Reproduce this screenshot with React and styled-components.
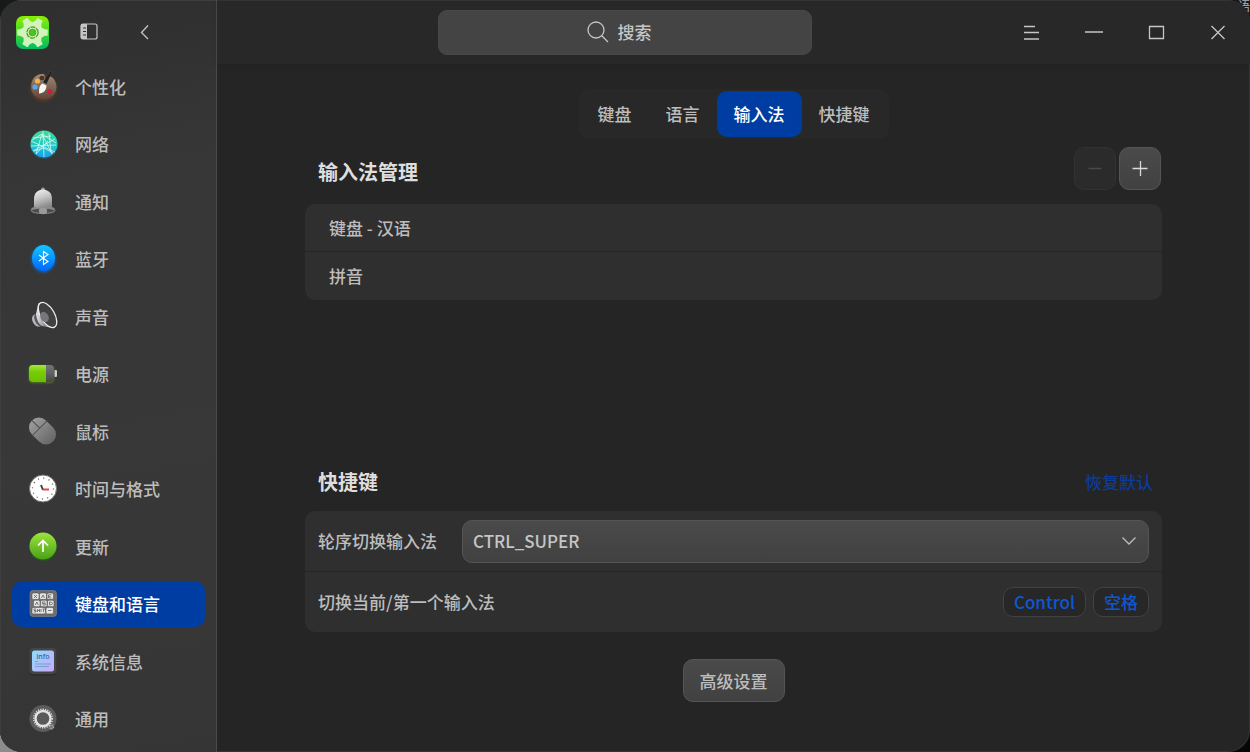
import { useState } from 'react';
import styled, { createGlobalStyle } from 'styled-components';

const GlobalStyle = createGlobalStyle`
  * {
    box-sizing: border-box;
  }

  body {
    margin: 0;
    background: linear-gradient(90deg, #8c8c8c 0, #8c8c8c 60px, #060606 120px) bottom / 100% 60px no-repeat #17191b;
    color: #bdbdbd;
    font-family: "Noto Sans CJK SC", "Noto Sans", sans-serif;
    font-size: 17px;
    font-weight: 500;
    line-height: 24px;
  }

  button, input, select {
    font: inherit;
    color: inherit;
  }
`;

const Desktop = styled.div`
  position: relative;
  overflow: hidden;
`;

const DesktopText = styled.span`
  position: absolute;
  top: -6px;
  right: 0;
  color: #9a9da1;
  font-size: 12px;
`;

const Window = styled.div`
  position: relative;
  display: flex;
  min-height: 100vh;
  overflow: hidden;
  border-radius: 22px;
  background: #252525;
  box-shadow: inset 0 0 0 1px #333;
`;

const Sidebar = styled.aside`
  display: flex;
  flex-direction: column;
  flex: none;
  width: 217px;
  padding-bottom: 4px;
  border-right: 1px solid #4b4b4b;
  background: linear-gradient(170deg, #2e2e2e 0, #363636 22%, #383838 60%, #353535 100%);
  box-shadow: inset 1px 1px 0 #3e3e3e;
`;

const SidebarHeader = styled.div`
  display: flex;
  align-items: center;
  gap: 24px;
  height: 58px;
  padding: 6px 0 0 16px;
`;

const IconButton = styled.button`
  display: flex;
  align-items: center;
  justify-content: center;
  width: 32px;
  height: 32px;
  padding: 0;
  border: 0;
  background: none;
  color: #c6c6c6;
`;

const Nav = styled.nav`
  display: grid;
  flex: 1;
  grid-auto-rows: 1fr;
  align-items: center;
  padding: 0 11px 0 12px;
`;

const NavItem = styled.button`
  display: flex;
  align-items: center;
  gap: 18px;
  height: 46px;
  padding: 0 0 0 17px;
  border: 0;
  border-radius: 10px;
  background: ${({ $active }) => ($active ? '#003da3' : 'none')};
  color: ${({ $active }) => ($active ? '#fff' : '#bdbdbd')};
  text-align: left;

  svg {
    flex: none;
    overflow: visible;
  }
`;

const Main = styled.main`
  display: flex;
  flex: 1;
  flex-direction: column;
  min-width: 0;
`;

const TitleBar = styled.header`
  display: grid;
  grid-template-columns: calc(50vw - 404px) 374px 1fr;
  align-items: center;
  height: 64px;
  padding-right: 16px;
  background: #282828;
  box-shadow: inset 0 1px 0 #343434, 0 1px 6px rgba(0, 0, 0, 0.12);
`;

const Search = styled.label`
  display: flex;
  grid-column: 2;
  align-items: center;
  justify-content: center;
  gap: 9px;
  height: 45px;
  border: 1px solid #484848;
  border-radius: 9px;
  background: #444;
`;

const SearchInput = styled.input`
  width: 46px;
  padding: 0;
  border: 0;
  outline: 0;
  background: none;

  &::placeholder {
    color: #c6c6c6;
    opacity: 1;
  }
`;

const WindowControls = styled.div`
  display: flex;
  justify-content: flex-end;
  gap: 30px;
`;

const Content = styled.div`
  padding: 25px 88px 50px;
`;

const Tabs = styled.div`
  display: flex;
  width: fit-content;
  margin: 0 auto;
  padding: 2px;
  border-radius: 10px;
  background: #282828;
`;

const Tab = styled.button`
  height: 46px;
  padding: 0 17px;
  border: 0;
  border-radius: 10px;
  background: ${({ $active }) => ($active ? '#003da3' : 'none')};
  color: ${({ $active }) => ($active ? '#fff' : '#bdbdbd')};
`;

const SectionHeader = styled.div`
  display: flex;
  align-items: center;
  justify-content: space-between;
  height: ${({ $compact }) => ($compact ? '52px' : '58px')};
  margin-bottom: 7px;
  padding: 0 1px 0 13px;
`;

const SectionTitle = styled.h2`
  margin: 0;
  padding-top: 8px;
  color: #dedede;
  font-size: 20px;
  font-weight: 700;
`;

const ButtonGroup = styled.div`
  display: flex;
  gap: 3px;
`;

const Button = styled.button`
  display: flex;
  align-items: center;
  justify-content: center;
  height: 43px;
  padding: 0 16px;
  border: 1px solid #555;
  border-radius: 10px;
  background: linear-gradient(#4a4a4a, #414141);
  color: #bdbdbd;
`;

const SquareButton = styled(Button)`
  width: 42px;
  padding: 0;
  color: #dadada;

  &:disabled {
    border-color: #323232;
    background: #2b2b2b;
    color: #484848;
  }
`;

const MethodArea = styled.div`
  min-height: 248px;
`;

const Panel = styled.ul`
  margin: 0;
  padding: 0;
  overflow: hidden;
  border-radius: 10px;
  background: #2f2f2f;
  list-style: none;
`;

const MethodRow = styled.li`
  display: flex;
  align-items: center;
  height: 47px;
  padding: 0 24px;

  & + & {
    height: 49px;
    border-top: 1px solid #242424;
  }
`;

const SettingRow = styled.li`
  display: flex;
  align-items: center;
  gap: 25px;
  height: 60px;
  padding: 0 13px;

  & + & {
    height: 61px;
    border-top: 1px solid #242424;
  }
`;

const SelectBox = styled.div`
  position: relative;
  flex: 1;

  svg {
    position: absolute;
    top: 14px;
    right: 12px;
    pointer-events: none;
  }
`;

const Select = styled.select`
  display: block;
  width: 100%;
  height: 43px;
  padding: 0 36px 0 10px;
  border: 1px solid #555;
  border-radius: 10px;
  appearance: none;
  background: linear-gradient(#4a4a4a, #414141);
  color: #c6c6c6;
`;

const Keys = styled.div`
  display: flex;
  gap: 7px;
  margin-left: auto;
`;

const Key = styled.kbd`
  height: 30px;
  padding: 2px 10px;
  border: 1px solid #424242;
  border-radius: 10px;
  background: #272727;
  color: #0d57d2;
  font-family: inherit;
  font-size: 17px;
`;

const ResetButton = styled.button`
  padding: 8px 8px 0;
  border: 0;
  background: none;
  color: #0b3c99;
`;

const Footer = styled.div`
  display: flex;
  justify-content: center;
  padding-top: 27px;
`;

const gearTeeth = [0, 60, 120, 180, 240, 300];

const SettingsLogo = () => (
  <svg width="33" height="33" viewBox="0 0 33 33" aria-hidden="true">
    <defs>
      <linearGradient id="logoBg" x2="0" y2="1">
        <stop offset="0" stopColor="#8cf000" />
        <stop offset="1" stopColor="#00bd62" />
      </linearGradient>
    </defs>
    <rect width="33" height="33" rx="7" fill="url(#logoBg)" />
    <g fill="#d3f3bd" stroke="#d3f3bd" strokeWidth="1.500" strokeLinejoin="round">
      <circle cx="16.500" cy="16.500" r="9.500" />
      {gearTeeth.map((angle) => (
        <path key={angle} d="M24 11.500l4.500 2.500h2.500v5h-2.500L24 21.500z" transform={`rotate(${angle} 16.500 16.500)`} />
      ))}
    </g>
    <circle cx="16.500" cy="16.500" r="5.600" fill="#c9efac" stroke="#4d9c2c" strokeWidth="1.300" strokeDasharray="5 .9" />
    <circle cx="16.500" cy="16.500" r="3.300" fill="#43c81e" stroke="#5f9f31" />
  </svg>
);

const PaletteIcon = () => (
  <svg width="28" height="28" viewBox="0 0 28 28" aria-hidden="true">
    <defs>
      <linearGradient id="wood" x2="0" y2="1">
        <stop offset="0" stopColor="#a08a78" />
        <stop offset="1" stopColor="#5f4538" />
      </linearGradient>
      <filter id="warmGlow" x="-30%" y="-30%" width="160%" height="160%">
        <feGaussianBlur stdDeviation="1.500" />
      </filter>
    </defs>
    <circle cx="14.500" cy="15" r="13" fill="#80401f" opacity=".6" filter="url(#warmGlow)" />
    <path d="M15 1C7 0 2 6 2 14c0 7 6 12 13 12 8 0 12.500-6 12.500-12 0-6-3.500-10-7.500-11l-3 4z" fill="url(#wood)" />
    <circle cx="8.500" cy="8" r="2.600" fill="#f5b23e" />
    <circle cx="6" cy="14" r="2.600" fill="#5aa7ee" />
    <circle cx="20.500" cy="18.500" r="2.500" fill="#dc173d" />
    <ellipse cx="13" cy="5" rx="2.600" ry="2.200" fill="#49342b" />
    <path d="M20.500 0l1.500 1-4.500 10-3.500-2z" fill="#202224" />
    <circle cx="21.500" cy="0" r="1.500" fill="#17191a" stroke="#555" strokeWidth=".5" />
    <path d="M13.500 10.500l4 2c0 4-2.500 8-7.500 8 0-5 0-8 3.500-10z" fill="#f5f5f2" />
  </svg>
);

const NetworkIcon = () => (
  <svg width="28" height="28" viewBox="0 0 28 28" aria-hidden="true">
    <defs>
      <linearGradient id="net" x2="0" y2="1">
        <stop offset="0" stopColor="#45d996" />
        <stop offset=".6" stopColor="#20c6c9" />
        <stop offset="1" stopColor="#179ff0" />
      </linearGradient>
    </defs>
    <circle cx="15" cy="15" r="14" fill="#2492a0" opacity=".25" />
    <circle cx="15" cy="14" r="13.500" fill="url(#net)" />
    <path
      d="M13 4L7 24M13 4l10 20M14 1l1 26M2 11l24 11M26 9L4 21M2 16l25-1M13 4l14 9M13 4L3 10M7 24l12-13M5 21l10-3 9 5M20 3l2 19M4 8l18-2"
      fill="none"
      stroke="#e4fffc"
      strokeWidth=".7"
    />
  </svg>
);

const BellIcon = () => (
  <svg width="28" height="28" viewBox="0 0 28 28" aria-hidden="true">
    <defs>
      <linearGradient id="bell" x2=".3" y2="1">
        <stop offset="0" stopColor="#f4f4f4" />
        <stop offset=".5" stopColor="#c6c6c6" />
        <stop offset="1" stopColor="#8b8b8b" />
      </linearGradient>
    </defs>
    <circle cx="14" cy="1.500" r="2" fill="#9d9d9d" />
    <ellipse cx="14" cy="22.500" rx="12" ry="3" fill="#4c4c4c" stroke="#8d8d8d" />
    <path d="M5 19.500V11C5 5 9 1.500 14 1.500S23 5 23 11v8.500q-9 2.500-18 0z" fill="url(#bell)" />
    <path d="M2 22q0-2.500 3-3 9 2.500 18 0 3 .5 3 3-12-3-24 0z" fill="#888" />
    <ellipse cx="14" cy="23" rx="4.200" ry="3.200" fill="#9a9a9a" />
  </svg>
);

const BluetoothIcon = () => (
  <svg width="28" height="28" viewBox="0 0 28 28" aria-hidden="true">
    <defs>
      <linearGradient id="bt" x2="0" y2="1">
        <stop offset="0" stopColor="#13c7ff" />
        <stop offset="1" stopColor="#0067ff" />
      </linearGradient>
      <filter id="blueGlow" x="-30%" y="-30%" width="160%" height="160%">
        <feGaussianBlur stdDeviation="1.500" />
      </filter>
    </defs>
    <ellipse cx="14.500" cy="14" rx="12" ry="13.500" fill="#007bff" opacity=".6" filter="url(#blueGlow)" />
    <ellipse cx="14.500" cy="13" rx="11.500" ry="13" fill="url(#bt)" />
    <path d="M10 10l9 6.500-4.500 3v-13l4.500 3-9 6.500" fill="none" stroke="#fff" strokeWidth="1.100" />
  </svg>
);

const SpeakerIcon = () => (
  <svg width="28" height="28" viewBox="0 0 28 28" aria-hidden="true">
    <defs>
      <linearGradient id="cone">
        <stop offset="0" stopColor="#e7e7ec" />
        <stop offset=".5" stopColor="#8f8f94" />
        <stop offset="1" stopColor="#c8c8cc" />
      </linearGradient>
    </defs>
    <ellipse cx="8" cy="17.500" rx="4.500" ry="6.500" fill="#b6b6bd" transform="rotate(-28 8 17.500)" />
    <ellipse cx="10" cy="17" rx="4" ry="7" fill="#58585c" transform="rotate(-28 10 17)" />
    <path d="M9.500 0L7 11q1 9 6 12l11 2z" fill="url(#cone)" />
    <ellipse cx="18.500" cy="12" rx="7" ry="14" fill="#414143" stroke="#efefef" strokeWidth="1.300" transform="rotate(-30 18.500 12)" />
    <ellipse cx="15.500" cy="14" rx="4" ry="5.500" fill="#76767b" transform="rotate(-28 15.500 14)" />
  </svg>
);

const BatteryIcon = () => (
  <svg width="28" height="28" viewBox="0 0 28 28" aria-hidden="true">
    <defs>
      <linearGradient id="charge" x2="0" y2="1">
        <stop offset="0" stopColor="#a3e63d" />
        <stop offset=".4" stopColor="#75cd05" />
        <stop offset="1" stopColor="#6bc000" />
      </linearGradient>
      <linearGradient id="cell" x2="0" y2="1">
        <stop offset="0" stopColor="#77777b" />
        <stop offset="1" stopColor="#47474a" />
      </linearGradient>
      <filter id="greenGlow" x="-30%" y="-30%" width="160%" height="160%">
        <feGaussianBlur stdDeviation="1.200" />
      </filter>
    </defs>
    <rect y="6" width="25" height="17" rx="4" fill="#69a50e" opacity=".6" filter="url(#greenGlow)" />
    <rect y="5" width="25" height="17" rx="4" fill="url(#cell)" />
    <path d="M4 5h13v17H4a4 4 0 0 1-4-4V9a4 4 0 0 1 4-4z" fill="url(#charge)" />
    <rect x="25.500" y="10" width="2.500" height="7" rx="1" fill="#cacaca" />
  </svg>
);

const MouseIcon = () => (
  <svg width="28" height="28" viewBox="0 0 28 28" aria-hidden="true">
    <defs>
      <linearGradient id="mouse" x2="0" y2="1">
        <stop offset="0" stopColor="#9c9c9c" />
        <stop offset="1" stopColor="#666" />
      </linearGradient>
    </defs>
    <g transform="rotate(-45 13.500 13)">
      <rect x="3.500" y="-2" width="20" height="30" rx="10" fill="url(#mouse)" />
      <path d="M3.500 9h20M13.500-2V9" stroke="#4e4e4e" />
    </g>
  </svg>
);

const ClockIcon = () => (
  <svg width="28" height="28" viewBox="0 0 28 28" aria-hidden="true">
    <circle cx="14" cy="13.500" r="13.500" fill="#fff" stroke="#737373" />
    <circle cx="14" cy="13.500" r="10.500" fill="none" stroke="#555" strokeWidth="1.300" strokeDasharray="1 4.500" />
    <path d="M12 10l2 5" stroke="#444" strokeWidth="2" />
    <path d="M14 14.500h6" stroke="#ed4343" strokeWidth="2" />
  </svg>
);

const UpdateIcon = () => (
  <svg width="28" height="28" viewBox="0 0 28 28" aria-hidden="true">
    <defs>
      <linearGradient id="update" x2="0" y2="1">
        <stop offset="0" stopColor="#9ee43b" />
        <stop offset="1" stopColor="#47a118" />
      </linearGradient>
    </defs>
    <circle cx="14" cy="14" r="14" fill="#285c16" opacity=".7" />
    <circle cx="14" cy="13" r="13.500" fill="url(#update)" />
    <path d="M14 19V8M9 12.500l5-5 5 5" fill="none" stroke="#fff" strokeWidth="1.700" />
  </svg>
);

const KeyboardIcon = () => (
  <svg width="28" height="28" viewBox="0 0 28 28" aria-hidden="true">
    <rect x="1" y=".5" width="26.500" height="26" rx="3" fill="#6d6d6d" stroke="#888" strokeWidth=".6" />
    <g fill="#e4e4e4" stroke="#454545" strokeWidth=".5">
      <rect x="3" y="3" width="7" height="6.500" rx="1.500" />
      <rect x="10.500" y="3" width="7" height="6.500" rx="1.500" />
      <rect x="18" y="3" width="6.500" height="6.500" rx="1.500" />
      <rect x="4.500" y="10.200" width="6.500" height="6.500" rx="1.500" />
      <rect x="11.500" y="10.200" width="6.500" height="6.500" rx="1.500" />
      <rect x="18.500" y="10.200" width="6.500" height="6.500" rx="1.500" />
      <rect x="3" y="17.400" width="13.500" height="6.500" rx="1.500" />
      <rect x="17" y="17.400" width="7.500" height="6.500" rx="1.500" />
    </g>
    <g fill="none" stroke="#5e5e5e" strokeWidth=".8">
      <path d="M5 5l3 3M8 5L5 8M12.500 8L14 5l1.500 3M22.500 4.800h-3V8h3M19.500 6.500h2M6.300 15l1.500-3 1.500 3M16.300 12h-3v1.500h3V15h-3M20.500 12v3q3 0 3-1.500t-3-1.500M7 19H5v1.500h2V22H5M8.500 19v3M10.500 19v3M8.500 20.500h2M12 19v3M14.500 19v3M13.500 19H16M19 20.500h3.500" />
    </g>
  </svg>
);

const InfoIcon = () => (
  <svg width="28" height="28" viewBox="0 0 28 28" aria-hidden="true">
    <defs>
      <linearGradient id="info" x2="1" y2="1">
        <stop offset="0" stopColor="#8cdcff" />
        <stop offset="1" stopColor="#cba9fb" />
      </linearGradient>
    </defs>
    <rect x=".5" y="1" width="27" height="27" rx="4" fill="#2a2a2a" opacity=".6" />
    <rect x=".5" width="27" height="26" rx="4" fill="#454545" />
    <rect x="3" y="2.500" width="22" height="21" rx="2.500" fill="url(#info)" />
    <text x="14" y="11" fill="#426080" fontFamily="Noto Sans, sans-serif" fontSize="7" textAnchor="middle">info</text>
    <path d="M6 13.500h3M6 16h16M6 18.500h14" stroke="#7198c0" strokeWidth=".8" />
  </svg>
);

const GeneralIcon = () => (
  <svg width="28" height="28" viewBox="0 0 28 28" aria-hidden="true">
    <circle cx="14" cy="13.500" r="13.500" fill="#5c5c5c" />
    <circle cx="14" cy="13.500" r="9.300" fill="none" stroke="#e0e0e0" strokeWidth="1.500" strokeDasharray="1.200 1.200" />
    <circle cx="14" cy="13.500" r="7.500" fill="#595959" stroke="#e3e3e3" strokeWidth="2.400" />
    <circle cx="22.500" cy="22" r="2" fill="#777" stroke="#aaa" strokeWidth="1.500" strokeDasharray="1 .8" />
  </svg>
);

const navItems = [
  { label: '个性化', Icon: PaletteIcon },
  { label: '网络', Icon: NetworkIcon },
  { label: '通知', Icon: BellIcon },
  { label: '蓝牙', Icon: BluetoothIcon },
  { label: '声音', Icon: SpeakerIcon },
  { label: '电源', Icon: BatteryIcon },
  { label: '鼠标', Icon: MouseIcon },
  { label: '时间与格式', Icon: ClockIcon },
  { label: '更新', Icon: UpdateIcon },
  { label: '键盘和语言', Icon: KeyboardIcon },
  { label: '系统信息', Icon: InfoIcon },
  { label: '通用', Icon: GeneralIcon },
];

const tabs = ['键盘', '语言', '输入法', '快捷键'];
const inputMethods = ['键盘 - 汉语', '拼音'];

// Thin line icons for the toolbar and small buttons
const LineIcon = ({ size = 24, d }) => (
  <svg width={size} height={size} viewBox={`0 0 ${size} ${size}`} fill="none" stroke="currentColor" aria-hidden="true">
    <path d={d} strokeWidth="1.3" />
  </svg>
);

const App = () => {
  const [section, setSection] = useState('键盘和语言');
  const [tab, setTab] = useState('输入法');

  return (
    <Desktop>
      <GlobalStyle />
      <DesktopText aria-hidden="true">语</DesktopText>
      <Window>
        <Sidebar>
          <SidebarHeader>
            <SettingsLogo />
            <IconButton type="button" aria-label="侧边栏">
              <svg width="18" height="18" viewBox="0 0 18 18" aria-hidden="true">
                <rect x="1" y="1" width="16" height="15" rx="2" fill="none" stroke="#c6c6c6" strokeWidth="1.200" />
                <path d="M1 1h6v15H1z" fill="#c6c6c6" />
                <path d="M3 5h3M3 8.500h3M3 12h3" stroke="#333" />
              </svg>
            </IconButton>
            <IconButton type="button" aria-label="返回">
              <LineIcon d="M15 5.500L8.500 12.500l6.500 6.500" />
            </IconButton>
          </SidebarHeader>
          <Nav>
            {navItems.map(({ label, Icon }) => (
              <NavItem key={label} type="button" $active={label === section} onClick={() => setSection(label)}>
                <Icon />
                {label}
              </NavItem>
            ))}
          </Nav>
        </Sidebar>
        <Main>
          <TitleBar>
            <Search>
              <svg width="22" height="22" viewBox="0 0 22 22" fill="none" stroke="#c6c6c6" strokeWidth="1.300" aria-hidden="true">
                <circle cx="9" cy="9" r="8" />
                <path d="M14.500 14.500l6.500 6.500" />
              </svg>
              <SearchInput type="text" placeholder="搜索" aria-label="搜索" />
            </Search>
            <WindowControls>
              <IconButton type="button" aria-label="菜单">
                <LineIcon d="M4 6.500h11M4 12.500h15M4 19h15" />
              </IconButton>
              <IconButton type="button" aria-label="最小化">
                <LineIcon d="M3 12h18" />
              </IconButton>
              <IconButton type="button" aria-label="最大化">
                <LineIcon d="M5.500 6.500h14v12h-14z" />
              </IconButton>
              <IconButton type="button" aria-label="关闭">
                <LineIcon d="M5.500 6l13 13M18.500 6l-13 13" />
              </IconButton>
            </WindowControls>
          </TitleBar>
          <Content>
            <Tabs role="tablist">
              {tabs.map((name) => (
                <Tab key={name} type="button" role="tab" aria-selected={name === tab} $active={name === tab} onClick={() => setTab(name)}>
                  {name}
                </Tab>
              ))}
            </Tabs>
            <SectionHeader>
              <SectionTitle>输入法管理</SectionTitle>
              <ButtonGroup>
                <SquareButton type="button" aria-label="删除" disabled>
                  <LineIcon size={18} d="M2.500 9.500h13" />
                </SquareButton>
                <SquareButton type="button" aria-label="添加">
                  <LineIcon size={18} d="M1.500 9.500h15M9.500 2v15" />
                </SquareButton>
              </ButtonGroup>
            </SectionHeader>
            <MethodArea>
              <Panel>
                {inputMethods.map((name) => (
                  <MethodRow key={name}>{name}</MethodRow>
                ))}
              </Panel>
            </MethodArea>
            <SectionHeader $compact>
              <SectionTitle>快捷键</SectionTitle>
              <ResetButton type="button">恢复默认</ResetButton>
            </SectionHeader>
            <Panel>
              <SettingRow>
                <label htmlFor="switch-key">轮序切换输入法</label>
                <SelectBox>
                  <Select id="switch-key" defaultValue="CTRL_SUPER">
                    <option>CTRL_SUPER</option>
                    <option>CTRL_SHIFT</option>
                    <option>ALT_SHIFT</option>
                  </Select>
                  <LineIcon size={16} d="M1.500 3.500l6.500 6.500 6.500-6.500" />
                </SelectBox>
              </SettingRow>
              <SettingRow>
                <span>切换当前/第一个输入法</span>
                <Keys>
                  <Key>Control</Key>
                  <Key>空格</Key>
                </Keys>
              </SettingRow>
            </Panel>
            <Footer>
              <Button type="button">高级设置</Button>
            </Footer>
          </Content>
        </Main>
      </Window>
    </Desktop>
  );
};

export default App;
